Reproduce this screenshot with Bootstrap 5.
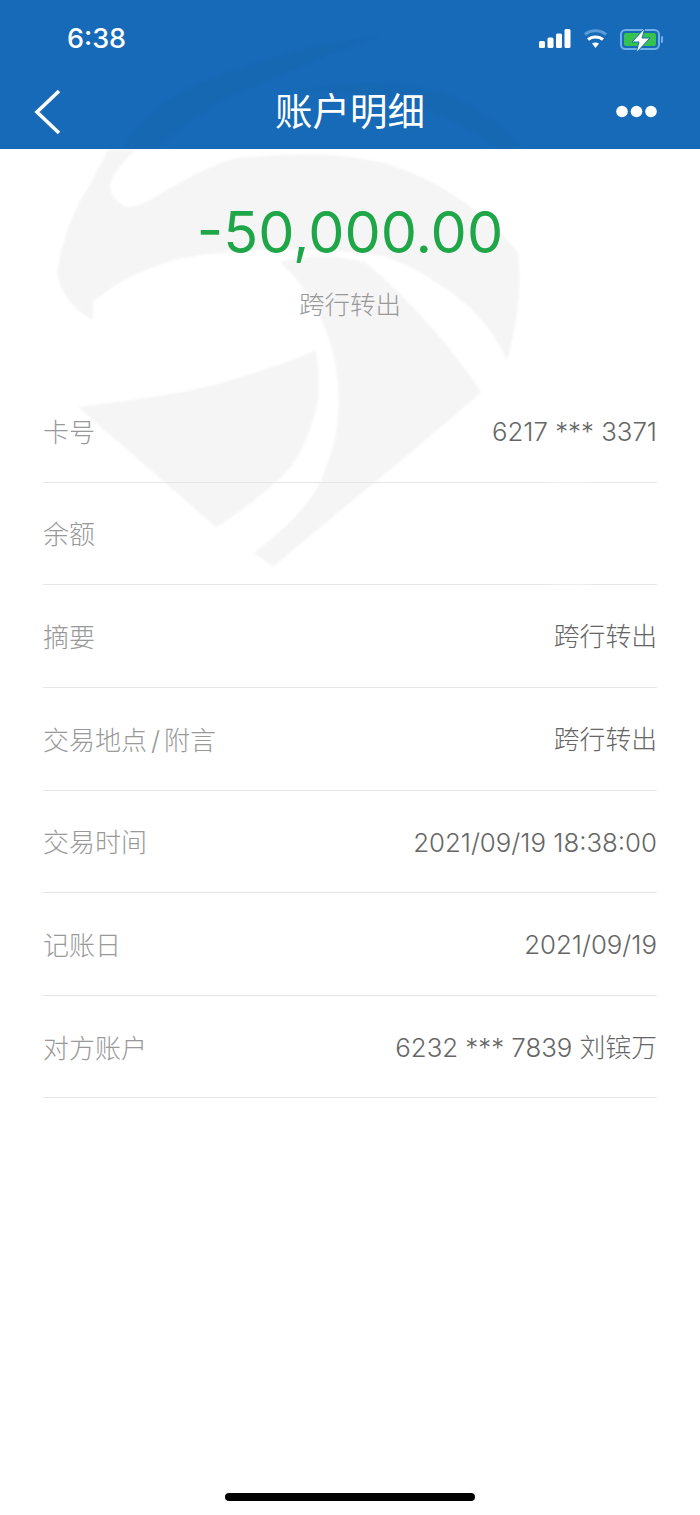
<!DOCTYPE html>
<html lang="zh-CN">
<head>
    <meta charset="UTF-8">
    <meta name="viewport" content="width=device-width, initial-scale=1.0">
    <title>账户明细</title>
    <link rel="stylesheet" href="https://cdn.jsdelivr.net/npm/bootstrap@5.3.0/dist/css/bootstrap.min.css">
    <style>
        html, body { height: 100%; }
        body { font-family: "Inter", "Noto Sans CJK SC", sans-serif; background: #fff; overflow: hidden; }
        .screen { width: 700px; height: 1515px; }
        .top-bar { height: 149px; background: #176ab7; color: #fff; }
        .status-row { height: 72px; padding: 23px 37px 0 67px; }
        .status-icons { margin-top: 5px; }
        .clock { font-size: 27px; font-weight: 500; line-height: 32px; }
        .title-row { height: 77px; padding: 2px 43px 0 43px; display: grid; grid-template-columns: 1fr auto 1fr; }
        .back-arrow { margin-left: -9px; }
        .page-title { font-size: 37.5px; line-height: 44px; font-weight: 400; }
        .watermark { left: 0; top: 0; pointer-events: none; }
        .page-mark { filter: blur(1px); }
        .amount-box { padding-top: 47px; height: 231px; }
        .amount { font-size: 57.5px; line-height: 72px; font-weight: 400; color: #1fa648; }
        .amount-type { font-size: 25.500px; line-height: 30px; color: #999; font-weight: 300; margin-top: 22px; }
        .detail-list { padding: 0 43px; }
        .detail-row { height: 102.65px; border-bottom: 1px solid #e6e6e6; font-size: 26px; padding-top: 3px; white-space: nowrap; }
        .detail-key { color: #999; font-weight: 300; }
        .detail-key i { font-style: normal; padding: 0 4px; }
        .detail-val { color: #666; font-weight: 300; font-size: 25.800px; }
        .smudge { left: 525px; top: 470px; width: 90px; height: 125px; background: radial-gradient(closest-side, #fff 55%, rgba(255,255,255,0)); }
        .home-bar { width: 250px; height: 8px; background: #000; border-radius: 4px; margin-bottom: 14px; }
    </style>
</head>
<body>
<div class="screen position-relative d-flex flex-column overflow-hidden">
    <!-- Watermark behind the page -->
    <svg class="watermark page-mark position-absolute" width="700" height="600" viewBox="0 0 700 600" fill="#f5f5f6">
        <path d="M93 320C72 310 55 285 58 268C62 240 75 205 90 185L108 150L135 150C120 165 110 178 110 188C112 200 122 207 132 207C150 205 190 170 237 158C290 153 340 152 384 163C440 180 490 215 518 253C522 290 516 330 507 360C495 335 480 315 461 300C435 280 410 265 384 256C330 248 260 248 223 253C170 255 125 275 93 302Z"/>
        <path d="M345 258L365 262C410 300 450 345 481 392C440 430 340 510 273 567L254 553C290 525 315 500 325 470C338 440 340 410 338 385C335 345 320 300 280 262C300 256 325 256 345 258Z"/>
        <path d="M78 407C130 400 180 395 220 383C260 372 295 360 316 350C320 380 320 405 312 423C305 445 295 465 281 477C260 497 240 512 216 527Z"/>
    </svg>

    <header class="top-bar position-relative overflow-hidden">
        <svg class="watermark page-mark position-absolute" width="700" height="149" viewBox="0 0 700 149" fill="#1668b3">
            <path d="M123 149C140 115 170 95 210 80C270 55 330 42 380 36C350 45 320 58 293 70C240 90 190 115 157 149Z"/>
            <path d="M300 92C340 78 400 82 443 93C480 108 505 128 520 149H495C470 125 430 108 395 100C360 94 330 92 300 92Z"/>
        </svg>
        <div class="status-row position-relative d-flex justify-content-between align-items-start">
            <span class="clock">6:38</span>
            <svg class="status-icons" width="124" height="26" viewBox="0 0 124 26">
                <g fill="#fff">
                    <rect x="0" y="13" width="6" height="7" rx="1.500"/>
                    <rect x="8.500" y="9.500" width="6" height="10.500" rx="1.500"/>
                    <rect x="17" y="5.500" width="6" height="14.500" rx="1.500"/>
                    <rect x="25.500" y="1" width="6" height="19" rx="1.500"/>
                </g>
                <path d="M46 6.500C52 1.500 61 1.500 67 6.500" fill="none" stroke="#5a9bd8" stroke-width="3"/>
                <path d="M49 11.500C53 8 60 8 64 11.500" fill="none" stroke="#fff" stroke-width="3"/>
                <path d="M53 15.500C55 14 58 14 60 15.500L56.500 20Z" fill="#fff"/>
                <rect x="82" y="2" width="38" height="19" rx="4.500" fill="none" stroke="#6fb0e8" stroke-width="2"/>
                <rect x="85" y="5" width="32" height="13" rx="2" fill="#35c24f"/>
                <rect x="122" y="8" width="2" height="7" rx="1" fill="#6fb0e8"/>
                <path d="M106 0L93 14H100L97 25L111 10H103Z" fill="#fff" stroke="#176ab7" stroke-width="1"/>
            </svg>
        </div>
        <div class="title-row position-relative align-items-center">
            <svg class="back-arrow" width="28" height="46" viewBox="0 0 28 46">
                <path d="M25 2L3 23L25 44" fill="none" stroke="#fff" stroke-width="3.600"/>
            </svg>
            <span class="page-title">账户明细</span>
            <div class="d-flex justify-content-end">
                <svg width="41" height="13" viewBox="0 0 41 13" fill="#fff">
                    <circle cx="6" cy="6.500" r="5.800"/>
                    <circle cx="20.500" cy="6.500" r="5.800"/>
                    <circle cx="35" cy="6.500" r="5.800"/>
                </svg>
            </div>
        </div>
    </header>

    <main class="position-relative flex-grow-1">
        <div class="amount-box text-center">
            <div class="amount">-50,000.00</div>
            <div class="amount-type">跨行转出</div>
        </div>
        <div class="detail-list">
            <div class="detail-row d-flex justify-content-between align-items-center"><span class="detail-key">卡号</span><span class="detail-val">6217 *** 3371</span></div>
            <div class="detail-row d-flex justify-content-between align-items-center"><span class="detail-key">余额</span><span class="detail-val"></span></div>
            <div class="detail-row d-flex justify-content-between align-items-center"><span class="detail-key">摘要</span><span class="detail-val">跨行转出</span></div>
            <div class="detail-row d-flex justify-content-between align-items-center"><span class="detail-key">交易地点<i>/</i>附言</span><span class="detail-val">跨行转出</span></div>
            <div class="detail-row d-flex justify-content-between align-items-center"><span class="detail-key">交易时间</span><span class="detail-val">2021/09/19 18:38:00</span></div>
            <div class="detail-row d-flex justify-content-between align-items-center"><span class="detail-key">记账日</span><span class="detail-val">2021/09/19</span></div>
            <div class="detail-row d-flex justify-content-between align-items-center"><span class="detail-key">对方账户</span><span class="detail-val">6232 *** 7839 刘镔万</span></div>
        </div>
    </main>
    <div class="smudge position-absolute"></div>

    <div class="home-bar align-self-center"></div>
</div>
<script src="https://cdn.jsdelivr.net/npm/bootstrap@5.3.0/dist/js/bootstrap.bundle.min.js"></script>
</body>
</html>
